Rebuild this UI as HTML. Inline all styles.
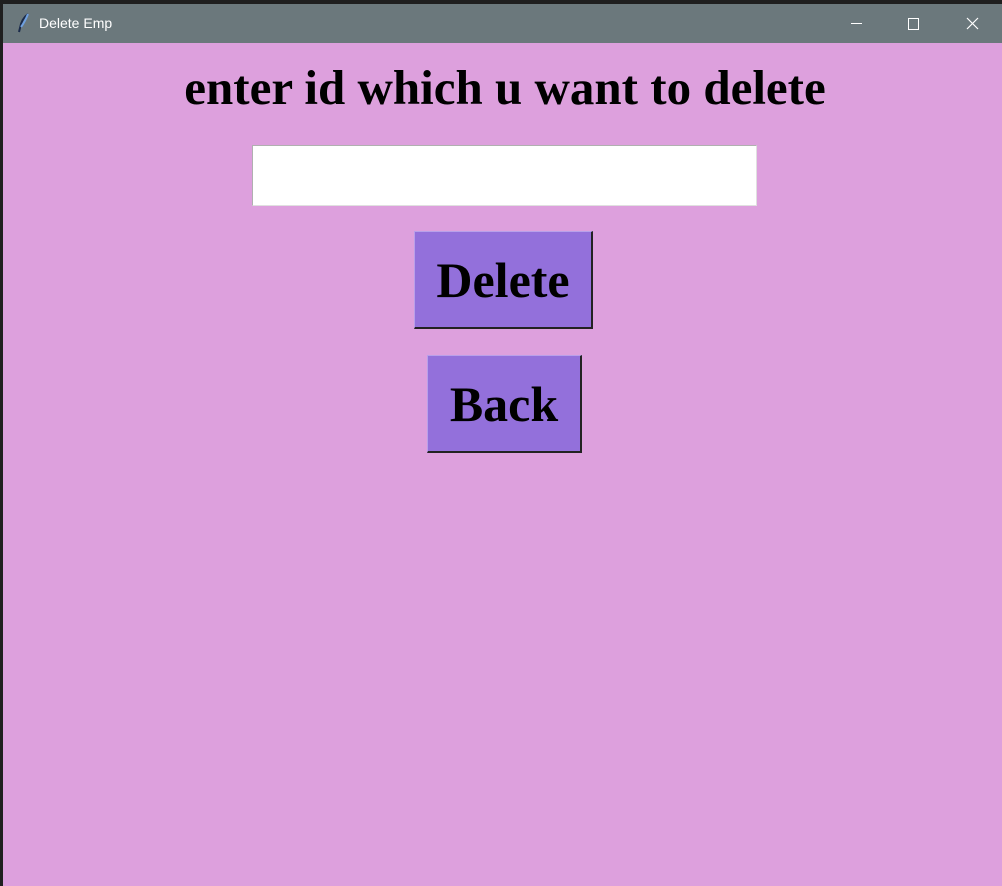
<!DOCTYPE html>
<html><head><style>
body{margin:0;width:1002px;height:886px;overflow:hidden;background:#1f1f1f;position:relative;font-family:"Liberation Serif",serif}
.win{position:absolute;left:3px;top:4px;right:0;bottom:0;background:#dda0dd}
.tb{position:absolute;left:0;top:0;right:0;height:39px;background:#6b787c;color:#fff;font-family:"Liberation Sans",sans-serif;font-size:14px}
.tb .t{position:absolute;left:36px;top:11px}
h1{position:absolute;left:4px;width:1002px;top:60px;margin:0;text-align:center;font-size:49px;font-weight:bold;line-height:56px;color:#000}
.e{position:absolute;left:252px;top:145px;width:503px;height:59px;background:#fff;border-top:1px solid #b0b0b0;border-left:1px solid #b0b0b0;border-right:1px solid #e0e0e0;border-bottom:1px solid #e0e0e0}
.b{position:absolute;background:#9370db;border:1px solid #b9a0ea;border-right:2px solid #222;border-bottom:2px solid #222;font-weight:bold;font-size:50px;text-align:center;box-sizing:border-box;color:#000}
</style></head><body>
<div class="win">
<div class="tb">
<svg style="position:absolute;left:14px;top:9px" width="14" height="20" viewBox="0 0 14 20"><path d="M11 1 C7 4 4 9 3 15 L2 19" stroke="#1a2a4a" stroke-width="2" fill="none"/><path d="M11 1 C9 6 7 10 4 14" stroke="#6fa0e0" stroke-width="2" fill="none"/></svg>
<span class="t">Delete Emp</span>
<div style="position:absolute;left:848px;top:19px;width:11px;height:1px;background:#fff"></div>
<div style="position:absolute;left:905px;top:14px;width:9px;height:10px;border:1px solid #fff"></div>
<svg style="position:absolute;left:963px;top:13px" width="13" height="13"><path d="M1 1L12 12M12 1L1 12" stroke="#fff" stroke-width="1.2"/></svg>
</div>
</div>
<h1>enter id which u want to delete</h1>
<div class="e"></div>
<div class="b" style="left:414px;top:231px;width:179px;height:98px;line-height:96px">Delete</div>
<div class="b" style="left:427px;top:355px;width:155px;height:98px;line-height:96px">Back</div>
</body></html>
